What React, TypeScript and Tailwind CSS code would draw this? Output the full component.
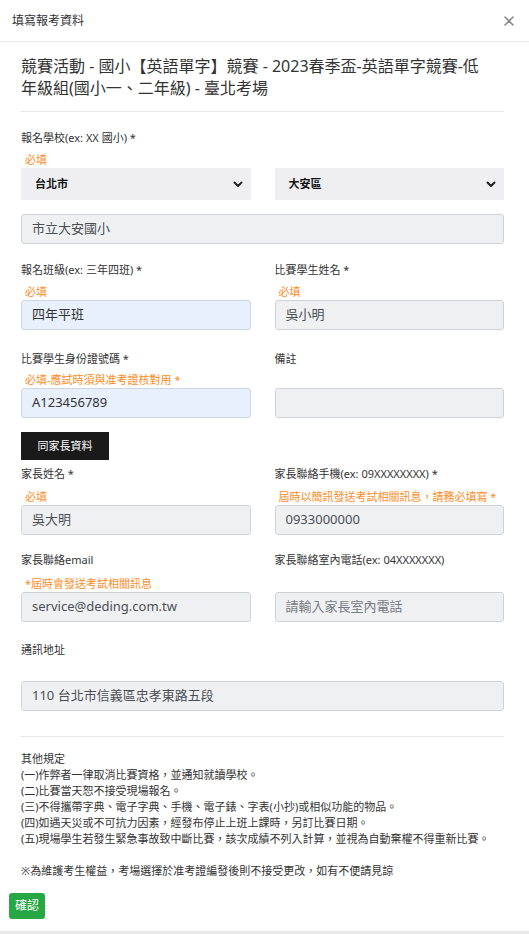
import React from "react";

const FONT = '"Segoe UI", "Noto Sans", "Noto Sans CJK TC", sans-serif';

function Label({ children, className = "" }: { children: React.ReactNode; className?: string }) {
  return <div className={`text-[11px] leading-[16px] text-[#333] whitespace-nowrap ${className}`}>{children}</div>;
}

function Hint({ children, className = "" }: { children: React.ReactNode; className?: string }) {
  return <div className={`pl-[4px] text-[11px] leading-[16px] text-[#ff8b1e] whitespace-nowrap ${className}`}>{children}</div>;
}

function Field({
  value,
  blue = false,
  placeholder = false,
  className = "",
}: {
  value?: string;
  blue?: boolean;
  placeholder?: boolean;
  className?: string;
}) {
  const bg = blue ? "bg-[#e8f0fe] border-[#cdd5df]" : "bg-[#eff0f2] border-[#cfd3d8]";
  const color = placeholder ? "text-[#757b82]" : blue ? "text-[#333]" : "text-[#4a4f55]";
  return (
    <div className={`h-[30px] rounded-[3px] border ${bg} flex items-center px-[10px] text-[13px] ${color} whitespace-nowrap ${className}`}>
      {value}
    </div>
  );
}

function Select({ value }: { value: string }) {
  return (
    <div className="h-[32px] bg-[#efeff1] flex items-center justify-between pl-[14px] pr-[8px]">
      <span className="text-[11px] font-bold text-[#111]">{value}</span>
      <svg width="10" height="7" viewBox="0 0 10 7">
        <path d="M1.5 1.5 L5 5 L8.5 1.5" fill="none" stroke="#222" strokeWidth="2" strokeLinecap="round" strokeLinejoin="round" />
      </svg>
    </div>
  );
}

export default function App() {
  return (
    <div className="w-[529px] h-[934px] bg-white overflow-hidden flex flex-col" style={{ fontFamily: FONT }}>
      {/* header */}
      <div className="h-[42px] shrink-0 border-b border-[#e6e6e6] flex items-center justify-between pl-[12px] pr-[15px]">
        <span className="text-[12px] text-[#333]">填寫報考資料</span>
        <svg width="10" height="10" viewBox="0 0 10 10" className="mr-[0px]">
          <path d="M1 1 L9 9 M9 1 L1 9" stroke="#8a8a8a" strokeWidth="1.6" strokeLinecap="round" />
        </svg>
      </div>

      <div className="pl-[21px] pr-[25px] flex flex-col">
        <div className="mt-[13px] text-[16px] leading-[22px] text-[#333] whitespace-nowrap">
          <div>競賽活動 - 國小【英語單字】競賽 - 2023春季盃-英語單字競賽-低</div>
          <div>年級組(國小一、二年級) - 臺北考場</div>
        </div>
        <div className="mt-[12px] h-px bg-[#e6e8eb]" />

        {/* school */}
        <Label className="mt-[18px]">報名學校(ex: XX 國小) *</Label>
        <Hint className="mt-[6px]">必填</Hint>
        <div className="grid grid-cols-2 gap-x-[24px]">
          <Select value="台北市" />
          <Select value="大安區" />
        </div>
        <Field className="mt-[14px]" value="市立大安國小" />

        {/* class / name */}
        <div className="mt-[18px] grid grid-cols-2 gap-x-[24px]">
          <div className="flex flex-col">
            <Label>報名班級(ex: 三年四班) *</Label>
            <Hint className="mt-[6px]">必填</Hint>
            <Field blue value="四年平班" />
          </div>
          <div className="flex flex-col">
            <Label>比賽學生姓名 *</Label>
            <Hint className="mt-[6px]">必填</Hint>
            <Field value="吳小明" />
          </div>
        </div>

        {/* id / note */}
        <div className="mt-[21px] grid grid-cols-2 gap-x-[24px]">
          <div className="flex flex-col">
            <Label>比賽學生身份證號碼 *</Label>
            <Hint className="mt-[5px]">必填-應試時須與准考證核對用 *</Hint>
            <Field blue value="A123456789" />
          </div>
          <div className="flex flex-col">
            <Label>備註</Label>
            <div className="mt-[5px] h-[16px]" />
            <Field value="" />
          </div>
        </div>

        <div className="mt-[14px] w-[88px] h-[28px] bg-[#1a1a1a] text-white text-[11px] flex items-center justify-center">
          同家長資料
        </div>

        {/* parent name / phone */}
        <div className="mt-[6px] grid grid-cols-2 gap-x-[24px]">
          <div className="flex flex-col">
            <Label>家長姓名 *</Label>
            <Hint className="mt-[7px]">必填</Hint>
            <Field value="吳大明" />
          </div>
          <div className="flex flex-col">
            <Label>家長聯絡手機(ex: 09XXXXXXXX) *</Label>
            <Hint className="mt-[7px]">屆時以簡訊發送考試相關訊息，請務必填寫 *</Hint>
            <Field value="0933000000" />
          </div>
        </div>

        {/* email / tel */}
        <div className="mt-[17px] grid grid-cols-2 gap-x-[24px]">
          <div className="flex flex-col">
            <Label>家長聯絡email</Label>
            <Hint className="mt-[8px]">*屆時會發送考試相關訊息</Hint>
            <Field value="service@deding.com.tw" />
          </div>
          <div className="flex flex-col">
            <Label>家長聯絡室內電話(ex: 04XXXXXXX)</Label>
            <div className="mt-[8px] h-[16px]" />
            <Field placeholder value="請輸入家長室內電話" />
          </div>
        </div>

        {/* address */}
        <Label className="mt-[20px]">通訊地址</Label>
        <Field className="mt-[23px]" value="110 台北市信義區忠孝東路五段" />

        <div className="mt-[25px] h-px bg-[#e6e8eb]" />

        <div className="mt-[14px] text-[11px] leading-[16px] text-[#333] whitespace-nowrap">
          <div>其他規定</div>
          <div>(一)作弊者一律取消比賽資格，並通知就讀學校。</div>
          <div>(二)比賽當天恕不接受現場報名。</div>
          <div>(三)不得攜帶字典、電子字典、手機、電子錶、字表(小抄)或相似功能的物品。</div>
          <div>(四)如遇天災或不可抗力因素，經發布停止上班上課時，另訂比賽日期。</div>
          <div>(五)現場學生若發生緊急事故致中斷比賽，該次成績不列入計算，並視為自動棄權不得重新比賽。</div>
          <div className="h-[16px]" />
          <div>※為維護考生權益，考場選擇於准考證編發後則不接受更改，如有不便請見諒</div>
        </div>
      </div>

      <div className="pl-[9px] mt-[14px]">
        <div className="w-[36px] h-[26px] rounded-[3px] bg-[#28a745] text-white text-[12px] flex items-center justify-center">
          確認
        </div>
      </div>
      <div className="mt-[12px] border-t-[3px] border-[#e9e9e9] h-[3px]" />
    </div>
  );
}
